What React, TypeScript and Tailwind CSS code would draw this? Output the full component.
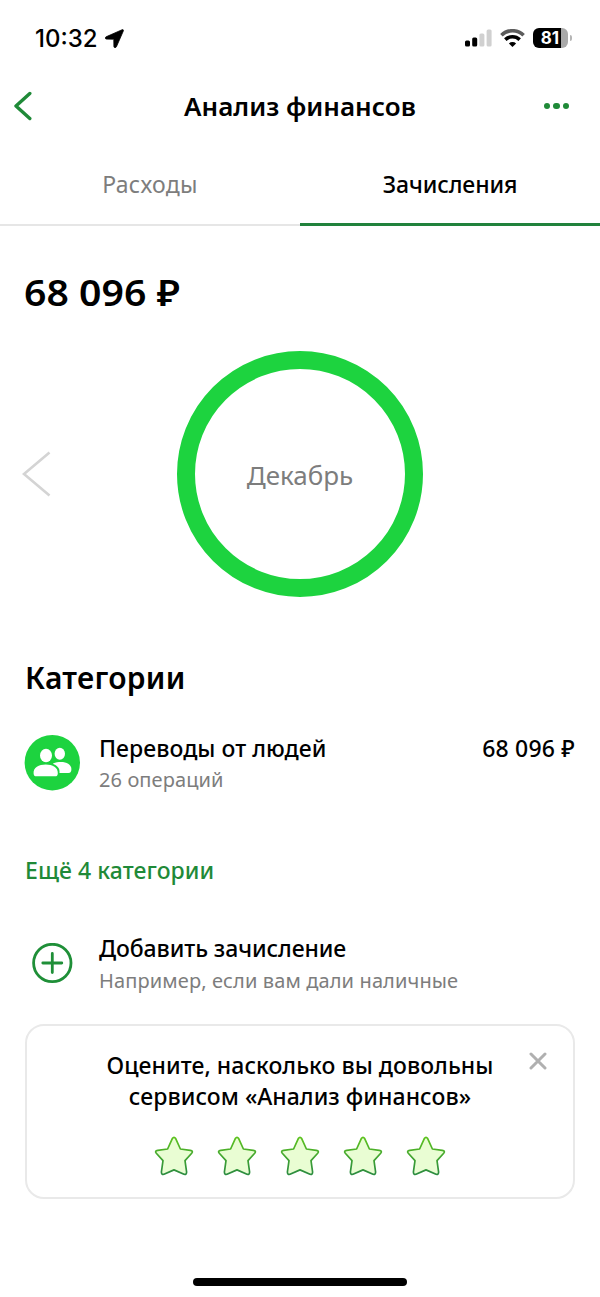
import React from "react";

function StatusBar() {
  return (
    <div className="flex h-[76px] items-center justify-between pl-[35px] pr-[28.5px]">
      <div className="flex items-center gap-[7px]">
        <span className="mt-[2px] font-['Inter',sans-serif] text-[24px] leading-[28px] font-medium">10:32</span>
        <svg width="19" height="19" viewBox="0 0 19 19" fill="#000" stroke="#000" strokeWidth="0.8" strokeLinejoin="round">
          <path d="M17.2.7 1.1 7.8C-.1 8.400.2 10 1.400 10.100l7 .1c.3 0 .4.1.4.4l.1 7c.1 1.300 1.900 1.400 2.500.2L18.400 1.800c.3-.8-.4-1.400-1.200-1.100Z" />
        </svg>
      </div>
      <div className="flex items-center">
        <svg width="27" height="18" viewBox="0 0 27 18">
          <rect x="0" y="11.5" width="5" height="6" rx="1.5" fill="#000" />
          <rect x="7.2" y="8.5" width="5" height="9" rx="1.5" fill="#000" />
          <rect x="14.4" y="4.5" width="5" height="13" rx="1.5" fill="#d0d0d0" />
          <rect x="21.6" y="0.5" width="5" height="17" rx="1.5" fill="#d0d0d0" />
        </svg>
        <svg className="ml-[8px]" width="25" height="18" viewBox="0 0 25 18" fill="none">
          <path d="M1.4 6.200a16 16 0 0 1 22.200 0" stroke="#5c5c5c" strokeWidth="3.600" />
          <path d="M5.3 10.600a10.500 10.500 0 0 1 14.400 0" stroke="#000" strokeWidth="3.600" />
          <path d="M12.5 18 8.9 14.500a5.200 5.200 0 0 1 7.200 0Z" fill="#000" />
        </svg>
        <div className="ml-[8px] flex h-[20px] w-[35px] items-center justify-center overflow-hidden rounded-[6px] bg-[linear-gradient(90deg,#000_28.5px,#a9a9a9_28.5px)] pr-[1px] font-['Inter',sans-serif] text-[17px] leading-[20px] font-bold text-white">
          81
        </div>
        <div className="ml-[1.5px] h-[6px] w-[2px] rounded-r-full bg-[#b5b5b5]" />
      </div>
    </div>
  );
}

function Header() {
  return (
    <header className="grid h-[60px] grid-cols-[60px_1fr_60px] items-center">
      <svg className="ml-[14px]" width="26" height="30" viewBox="0 0 26 30" fill="none" stroke="#1f8a38" strokeWidth="3.400" strokeLinecap="round" strokeLinejoin="round">
        <path d="M15.800 2.500 2 15 15.800 27.500" />
      </svg>
      <h1 className="text-center text-[26px] leading-[32px] font-semibold">Анализ финансов</h1>
      <div className="mr-[31px] flex justify-end gap-[3px]">
        <i className="size-[6.5px] shrink-0 rounded-full bg-[#1f8a38]" />
        <i className="size-[6.5px] shrink-0 rounded-full bg-[#1f8a38]" />
        <i className="size-[6.5px] shrink-0 rounded-full bg-[#1f8a38]" />
      </div>
    </header>
  );
}

function Star() {
  return (
    <svg width="40" height="40" viewBox="0 0 40 40">
      <defs>
        <linearGradient id="star-line" x1="0" y1="0" x2="0" y2="1">
          <stop offset="0" stopColor="#5cc21e" />
          <stop offset="1" stopColor="#2c8c41" />
        </linearGradient>
      </defs>
      <path
        d="M18.3 2.6Q20 .2 21.7 2.6L26.4 13 36.300 14.300Q39.600 14.900 37.700 17.200L31 24.600 32.600 36Q32.600 39 30 38.300L20 33.900 10 38.300Q7.400 39 7.400 36L9 24.600 2.300 17.200Q.4 14.900 3.700 14.300L13.600 13Z"
        fill="#e9fdd3"
        stroke="url(#star-line)"
        strokeWidth="1.7"
        strokeLinejoin="round"
      />
    </svg>
  );
}

export default function App() {
  return (
    <div className="flex h-[1297px] w-[600px] flex-col overflow-hidden bg-white font-['Noto_Sans',sans-serif] text-black">
      <StatusBar />
      <Header />
      <nav className="flex h-[90px] text-[23px] leading-[30px]">
        <div className="flex flex-1 justify-center border-b-2 border-[#e6e6e6] pt-[33px] tracking-[0.3px] text-[#7d7d7d]">Расходы</div>
        <div className="flex flex-1 justify-center border-b-3 border-[#21823c] pt-[33px] font-medium tracking-[-0.100px]">Зачисления</div>
      </nav>

      <div className="mt-[43px] ml-[24px] origin-left scale-x-[1.09] self-start text-[36px] leading-[48px] font-semibold">68 096 ₽</div>

      <section className="mt-[34px] flex h-[246px] items-center pl-[22px]">
        <svg width="29" height="46" viewBox="0 0 29 46" fill="none" stroke="#d4d4d4" strokeWidth="2.6">
          <path d="M27.500 1.500 2 23 27.500 44.500" />
        </svg>
        <div className="ml-[126px] flex size-[246px] items-center justify-center rounded-full border-[18.5px] border-[#1dd33f] pt-[2px] text-[26px] leading-[36px] text-[#7d7d7d]">
          Декабрь
        </div>
      </section>

      <h2 className="mt-[61px] ml-[25px] text-[30px] leading-[40px] font-semibold tracking-[0.25px]">Категории</h2>

      <div className="mt-[37px] flex h-[56px] items-center pr-[25px] pl-[24px]">
        <svg width="56" height="56" viewBox="0 0 56 56">
          <circle cx="28.300" cy="27.700" r="27.700" fill="#1dd33f" />
          <g fill="#fff">
            <ellipse cx="35.800" cy="18.800" rx="5.200" ry="6" />
            <path d="M29 28.500c9-3.200 18-.8 18.400 5.500 0 2.800-.8 4-3 4H33Z" />
            <ellipse cx="22" cy="20.500" rx="7.800" ry="8.600" fill="#1dd33f" />
            <path d="M8 42V36C8 25 35 25 35.500 36v6Z" fill="#1dd33f" />
            <ellipse cx="22" cy="20.500" rx="6" ry="6.800" />
            <path d="M9.600 38.500C9 32.500 15 29.500 21.700 29.500s12.700 3 12.100 9c-.1 2-1 2.800-2.800 2.800H12.400c-1.800 0-2.700-.8-2.800-2.800Z" />
          </g>
        </svg>
        <div className="ml-[19px] flex flex-1 flex-col pt-[2px]">
          <div className="flex justify-between text-[23px] leading-[32px] font-medium">
            <span className="tracking-[0.050px]">Переводы от людей</span>
            <span className="tracking-[0.200px]">68 096 ₽</span>
          </div>
          <span className="text-[20px] leading-[32px] tracking-[0.100px] text-[#7d7d7d]">26 операций</span>
        </div>
      </div>

      <div className="mt-[63px] ml-[25px] text-[23px] leading-[32px] font-medium tracking-[0.080px] text-[#1f8a38]">Ещё 4 категории</div>

      <div className="mt-[47px] flex h-[60px] items-center pl-[32px]">
        <svg width="41" height="41" viewBox="0 0 41 41" fill="none" stroke="#1f8f38" strokeWidth="2.800" strokeLinecap="round">
          <circle cx="20.300" cy="20" r="18.700" />
          <path d="M20.300 10.500v19M10.800 20h19" />
        </svg>
        <div className="ml-[26px] flex flex-col pt-[3px]">
          <span className="text-[23px] leading-[32px] font-medium tracking-[-0.080px]">Добавить зачисление</span>
          <span className="text-[20px] leading-[33px] tracking-[0.120px] text-[#7d7d7d]">Например, если вам дали наличные</span>
        </div>
      </div>

      <section className="relative mx-[25px] mt-[31px] flex h-[175px] flex-col items-center rounded-[19px] border-2 border-[#e9e9e9] pt-[24px]">
        <p className="text-center text-[23px] leading-[31px] font-medium tracking-[0.060px]">
          Оцените, насколько вы довольны
          <br />
          сервисом «Анализ финансов»
        </p>
        <svg className="absolute top-[26px] right-[26px]" width="18" height="18" viewBox="0 0 18 18" stroke="#b0b0b0" strokeWidth="3" strokeLinecap="round">
          <path d="m2 2 14 14M16 2 2 16" />
        </svg>
        <div className="mt-[24px] flex gap-[23px]">
          <Star />
          <Star />
          <Star />
          <Star />
          <Star />
        </div>
      </section>

      <div className="mt-auto mb-[11px] h-[8px] w-[214px] self-center rounded-full bg-black" />
    </div>
  );
}
